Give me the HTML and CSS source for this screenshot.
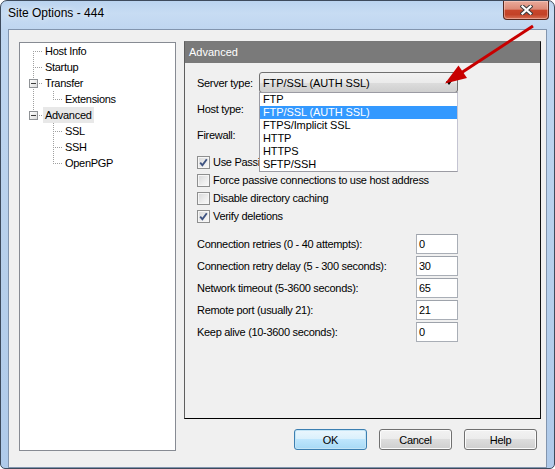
FILE: index.html
```html
<!DOCTYPE html>
<html>
<head>
<meta charset="utf-8">
<title>Site Options - 444</title>
<link rel="stylesheet" href="styles.css">
</head>
<body>
<div class="window">
  <div class="titlebar">
    <span class="title">Site Options - 444</span>
    <button class="close" aria-label="Close">
      <svg width="13" height="10" viewBox="0 0 13 10"><path d="M2.5 1.5 L10.5 8.5 M10.5 1.5 L2.5 8.5" stroke="#3c3c3c" stroke-width="4.2" stroke-linecap="square"/><path d="M2.5 1.5 L10.5 8.5 M10.5 1.5 L2.5 8.5" stroke="#fff" stroke-width="2.2" stroke-linecap="square"/></svg>
    </button>
  </div>
  <div class="client">
    <div class="tree">
      <div class="node"><span class="ln first"></span><span class="label">Host Info</span></div>
      <div class="node"><span class="ln tee"></span><span class="label">Startup</span></div>
      <div class="node"><span class="ln tee"><span class="exp"></span></span><span class="label">Transfer</span></div>
      <div class="node"><span class="ln pipe"></span><span class="ln last"></span><span class="label">Extensions</span></div>
      <div class="node"><span class="ln last"><span class="exp"></span></span><span class="label sel">Advanced</span></div>
      <div class="node"><span class="ln"></span><span class="ln tee"></span><span class="label">SSL</span></div>
      <div class="node"><span class="ln"></span><span class="ln tee"></span><span class="label">SSH</span></div>
      <div class="node"><span class="ln"></span><span class="ln last"></span><span class="label">OpenPGP</span></div>
    </div>
    <div class="main">
      <div class="panel">
        <div class="panel-head">Advanced</div>
        <div class="panel-body">
          <div class="combos">
            <div class="combo-row">
              <span>Server type:</span>
              <div class="combo">
                <span class="combo-text">FTP/SSL (AUTH SSL)</span><span class="combo-arrow"></span>
                <ul class="dropdown">
                  <li>FTP</li>
                  <li class="hl">FTP/SSL (AUTH SSL)</li>
                  <li>FTPS/Implicit SSL</li>
                  <li>HTTP</li>
                  <li>HTTPS</li>
                  <li>SFTP/SSH</li>
                </ul>
              </div>
            </div>
            <div class="combo-row"><span>Host type:</span><div class="combo"><span class="combo-arrow"></span></div></div>
            <div class="combo-row"><span>Firewall:</span><div class="combo"><span class="combo-arrow"></span></div></div>
          </div>
          <div class="checks">
            <div class="check"><span class="box"><svg width="11" height="11" viewBox="0 0 11 11"><path d="M2.2 5.6 L4.4 8.3 L8.8 2.2" fill="none" stroke="#3f5482" stroke-width="1.9"/></svg></span><span class="clipped">Use Passive mode</span></div>
            <div class="check"><span class="box"></span>Force passive connections to use host address</div>
            <div class="check"><span class="box"></span>Disable directory caching</div>
            <div class="check"><span class="box"><svg width="11" height="11" viewBox="0 0 11 11"><path d="M2.2 5.6 L4.4 8.3 L8.8 2.2" fill="none" stroke="#3f5482" stroke-width="1.9"/></svg></span>Verify deletions</div>
          </div>
          <div class="fields">
            <span>Connection retries (0 - 40 attempts):</span><span class="input">0</span>
            <span>Connection retry delay (5 - 300 seconds):</span><span class="input">30</span>
            <span>Network timeout (5-3600 seconds):</span><span class="input">65</span>
            <span>Remote port (usually 21):</span><span class="input">21</span>
            <span>Keep alive (10-3600 seconds):</span><span class="input">0</span>
          </div>
        </div>
      </div>
      <div class="buttons">
        <button class="btn default">OK</button>
        <button class="btn">Cancel</button>
        <button class="btn">Help</button>
      </div>
    </div>
  </div>
  <svg class="annot" width="555" height="469" viewBox="0 0 555 469">
    <line x1="533" y1="26" x2="461" y2="73" stroke="#c80000" stroke-width="3"/>
    <polygon points="445,83.5 458.5,65.5 467,78" fill="#c80000"/>
  </svg>
</div>
</body>
</html>
```
FILE: styles.css
```css
* { box-sizing: border-box; }
html, body { margin: 0; padding: 0; }
body {
  width: 555px;
  height: 469px;
  overflow: hidden;
  background: #fff;
  font-family: "Liberation Sans", Arial, sans-serif;
  font-size: 11px;
  letter-spacing: -0.3px;
  color: #000;
}
.window {
  position: relative;
  width: 555px;
  height: 469px;
  border: 1px solid #3d4a5c;
  border-radius: 7px 7px 5px 5px;
  background: linear-gradient(180deg, #bad3ef 0, #c7dcf3 12px, #bfd6f0 28px, #b6cfeb 60%, #afcaea 100%);
  display: flex;
  flex-direction: column;
}
.titlebar {
  height: 28px;
  display: flex;
  align-items: flex-start;
  flex: none;
}
.title {
  margin: 5px 0 0 7px;
  font-size: 12px;
  line-height: 15px;
  letter-spacing: 0;
  text-shadow: 0 0 6px rgba(255, 255, 255, 0.9);
}
.close {
  margin-left: auto;
  margin-right: 5px;
  width: 46px;
  height: 19px;
  padding: 0;
  border: 1px solid #55281f;
  border-top: 0;
  border-radius: 0 0 4px 4px;
  background: linear-gradient(180deg, #e9ab9b 0, #dc8a77 45%, #c8462b 52%, #c34227 75%, #d77156 100%);
  box-shadow: inset 0 0 0 1px rgba(255, 220, 210, 0.45);
  display: flex;
  align-items: center;
  justify-content: center;
}
.client {
  flex: 1;
  margin: 0 7px;
  border: 1px solid #8295ae;
  background: #f0f0f0;
  display: flex;
  align-items: flex-start;
  gap: 8px;
  padding: 12px 5px 10px 10px;
}

/* tree */
.tree {
  --dv: repeating-linear-gradient(180deg, #a0a0a0 0 1px, transparent 1px 2px);
  --dh: repeating-linear-gradient(90deg, #a0a0a0 0 1px, transparent 1px 2px);
  width: 157px;
  height: 409px;
  flex: none;
  border: 1px solid #878b93;
  background: #fff;
  padding-left: 3px;
}
.node {
  display: flex;
  height: 16px;
}
.ln {
  flex: none;
  width: 20px;
  height: 16px;
  background-repeat: no-repeat;
}
.ln.first {
  background-image: var(--dv), var(--dh);
  background-size: 1px 8px, 10px 1px;
  background-position: 10px 8px, 10px 8px;
}
.ln.tee {
  background-image: var(--dv), var(--dh);
  background-size: 1px 16px, 10px 1px;
  background-position: 10px 0, 10px 8px;
}
.ln.last {
  background-image: var(--dv), var(--dh);
  background-size: 1px 9px, 10px 1px;
  background-position: 10px 0, 10px 8px;
}
.ln.pipe {
  background-image: var(--dv);
  background-size: 1px 16px;
  background-position: 10px 0;
}
.exp {
  display: block;
  width: 9px;
  height: 9px;
  margin: 4px 0 0 6px;
  border: 1px solid #8f9296;
  background:
    linear-gradient(#3c3c3c, #3c3c3c) center / 5px 1px no-repeat,
    linear-gradient(135deg, #ffffff, #dcdcdc);
}
.label {
  padding: 0 2px;
  line-height: 16px;
  height: 16px;
  white-space: nowrap;
}
.label.sel { background: #e8e8e8; }

/* right side */
.main {
  width: 357px;
  flex: none;
  margin-top: -1px;
  display: flex;
  flex-direction: column;
}
.panel {
  height: 378px;
  border: 1px solid #5e5e5e;
  border-top-color: #787878;
  border-right-color: #111;
  border-bottom-color: #000;
}
.panel-head {
  height: 21px;
  line-height: 21px;
  background: #7a7a7a;
  color: #fff;
  padding-left: 4px;
  letter-spacing: 0;
}
.panel-body {
  padding: 9px 0 0 12px;
}
.combos {
  display: flex;
  flex-direction: column;
  gap: 5px;
}
.combo-row {
  display: grid;
  grid-template-columns: 62px 199px;
  align-items: center;
  height: 21px;
}
.combo {
  position: relative;
  height: 21px;
  border: 1px solid #707070;
  border-radius: 3px;
  background: linear-gradient(180deg, #f2f2f2 0, #ebebeb 50%, #dddddd 50%, #cfcfcf 100%);
  display: flex;
  align-items: center;
  padding-left: 3px;
  letter-spacing: -0.1px;
}
.combo-arrow {
  margin-left: auto;
  margin-right: 5px;
  width: 0;
  height: 0;
  border-left: 3.5px solid transparent;
  border-right: 3.5px solid transparent;
  border-top: 4px solid #000;
}
.dropdown {
  position: absolute;
  z-index: 2;
  top: 100%;
  left: -1px;
  width: 199px;
  margin: 0;
  padding: 0;
  list-style: none;
  background: #fff;
  border: 1px solid #9b9ba3;
  border-right-color: #c4c4d2;
}
.dropdown li {
  height: 13px;
  line-height: 13px;
  padding-left: 3px;
  white-space: nowrap;
}
.dropdown li.hl {
  background: #3399ff;
  color: #fff;
}
.checks {
  margin-top: 8px;
}
.check {
  display: flex;
  align-items: center;
  gap: 3px;
  height: 18px;
  white-space: nowrap;
}
.clipped {
  width: 46px;
  overflow: hidden;
  white-space: nowrap;
}
.box {
  flex: none;
  width: 13px;
  height: 13px;
  border: 1px solid #8e8f8f;
  background: linear-gradient(135deg, #d6d7d8 0, #eeeeee 60%, #fafafa 100%);
  box-shadow: inset 0 0 0 1px #f6f6f6;
  display: flex;
}
.fields {
  margin-top: 8px;
  display: grid;
  grid-template-columns: 219px 42px;
  grid-auto-rows: 22px;
  align-items: center;
  white-space: nowrap;
}
.input {
  height: 20px;
  line-height: 18px;
  border: 1px solid #a9aeb6;
  border-top-color: #9ea3ab;
  background: #fff;
  padding-left: 2px;
}
.buttons {
  display: flex;
  justify-content: flex-end;
  gap: 12px;
  padding-right: 4px;
  margin-top: 10px;
}
.btn {
  width: 73px;
  height: 21px;
  padding: 0;
  font: inherit;
  letter-spacing: inherit;
  color: #000;
  border: 1px solid #707070;
  border-radius: 3px;
  background: linear-gradient(180deg, #f2f2f2 0, #ebebeb 50%, #dddddd 50%, #cfcfcf 100%);
  box-shadow: inset 0 0 0 1px #fbfbfb;
}
.btn.default {
  border-color: #3c7fb1;
  background: linear-gradient(180deg, #eaf6fd 0, #d9f0fc 50%, #bee6fd 50%, #a7d9f5 100%);
  box-shadow: inset 0 0 0 1px #c4e5f6;
}
.annot {
  position: absolute;
  left: -1px;
  top: -1px;
  pointer-events: none;
  z-index: 5;
}
```
